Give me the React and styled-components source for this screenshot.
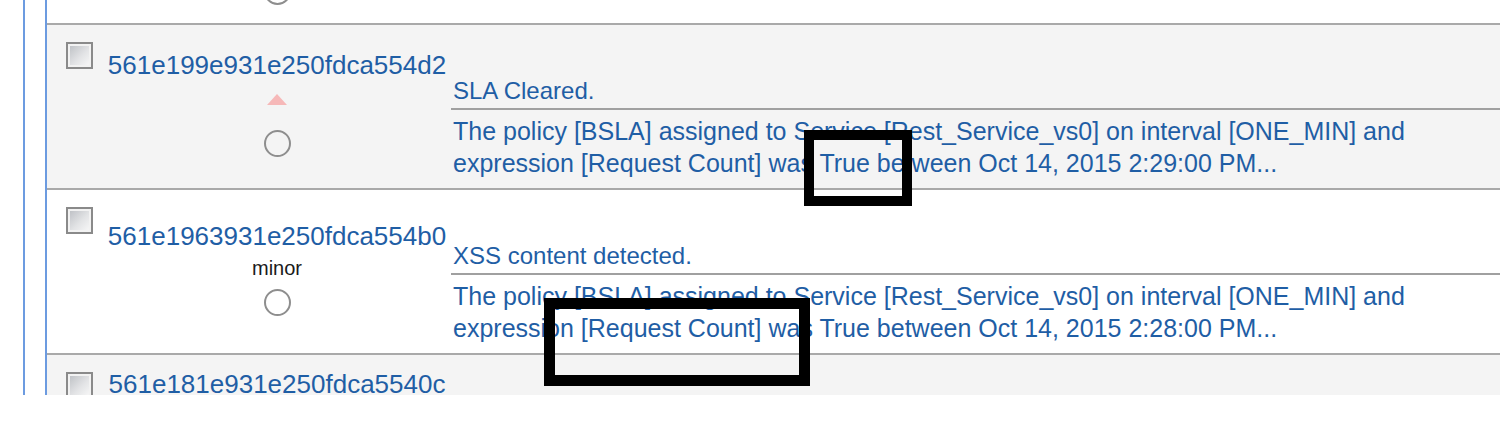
import styled, { createGlobalStyle } from "styled-components";

const GlobalStyle = createGlobalStyle`
  body {
    margin: 0;
    background: #fff;
    font-family: "Liberation Sans", Arial, sans-serif;
  }
`;

const Page = styled.div`
  position: relative;
  width: 1500px;
  height: 429px;
  overflow: hidden;
  background: #fff;
`;

const Frame = styled.div`
  height: 395px;
  margin-left: 23px;
  padding-left: 20px;
  border-left: 2px solid #6c9be0;
  overflow: hidden;
`;

const List = styled.div`
  margin-top: -142px;
  border-left: 2px solid #6c9be0;
`;

const Row = styled.div`
  display: grid;
  grid-template-columns: 60px 340px 1fr;
  height: 163px;
  border-top: 2px solid #a9a9a9;
  background: ${(p) => (p.$shaded ? "#f4f4f4" : "#fff")};
`;

const CheckCell = styled.div`
  padding: 17px 0 0 19px;
`;

const Checkbox = styled.div`
  box-sizing: border-box;
  width: 27px;
  height: 27px;
  border: 2px solid #8a8a8a;
  box-shadow: inset 0 0 0 2px #f2f2f2;
  background: linear-gradient(135deg, #b9bcc1 0%, #e2e3e5 55%, #fafafa 100%);
`;

const IdCell = styled.div`
  display: flex;
  flex-direction: column;
  align-items: center;
  justify-content: ${(p) =>
    p.$valign === "start" ? "flex-start" : p.$valign === "end" ? "flex-end" : "center"};
  padding-top: ${(p) => (p.$valign === "start" ? "16px" : "0")};
  padding-bottom: ${(p) => (p.$valign === "end" ? "18px" : p.$valign === "start" ? "0" : "4px")};
`;

const AlertId = styled.a`
  font-size: 26px;
  line-height: 26px;
  color: #1f5ea5;
  text-decoration: none;
  white-space: nowrap;
`;

const Severity = styled.div`
  margin-top: 9px;
  font-size: 20px;
  line-height: 20px;
  color: #1a1a1a;
`;

const Raised = styled.div`
  margin-top: 16px;
  width: 0;
  height: 0;
  border-left: 10px solid transparent;
  border-right: 10px solid transparent;
  border-bottom: 11px solid #f6b8b8;
`;

const Radio = styled.div`
  box-sizing: border-box;
  margin-top: ${(p) => p.$gap || 0}px;
  width: 27px;
  height: 27px;
  border-radius: 50%;
  border: 2px solid #8e8e8e;
`;

const MessageCell = styled.div`
  padding: 52px 0 0 4px;
  color: #1f5ea5;
`;

const Title = styled.div`
  padding: 0 0 3px 2px;
  font-size: 24px;
  line-height: 28px;
  border-bottom: 2px solid #a0a0a0;
`;

const Description = styled.div`
  padding: 5px 0 0 2px;
  font-size: 25px;
  line-height: 32px;
  white-space: nowrap;
`;

const Callout = styled.div`
  position: absolute;
  box-sizing: border-box;
  border: ${(p) => p.$stroke}px solid #000;
`;

const alerts = [
  {
    id: "561e199e931e250fdca554d2",
    shaded: true,
    title: "SLA Cleared.",
    lines: [
      "The policy [BSLA] assigned to Service [Rest_Service_vs0] on interval [ONE_MIN] and",
      "expression [Request Count] was True between Oct 14, 2015 2:29:00 PM...",
    ],
  },
  {
    id: "561e1963931e250fdca554b0",
    severity: "minor",
    title: "XSS content detected.",
    lines: [
      "The policy [BSLA] assigned to Service [Rest_Service_vs0] on interval [ONE_MIN] and",
      "expression [Request Count] was True between Oct 14, 2015 2:28:00 PM...",
    ],
  },
];

const AlertRow = ({ alert }) => (
  <Row $shaded={alert.shaded}>
    <CheckCell>
      <Checkbox />
    </CheckCell>
    <IdCell>
      <AlertId href="#">{alert.id}</AlertId>
      {alert.severity ? <Severity>{alert.severity}</Severity> : <Raised />}
      <Radio $gap={alert.severity ? 11 : 25} />
    </IdCell>
    <MessageCell>
      <Title>{alert.title}</Title>
      <Description>
        {alert.lines[0]}
        <br />
        {alert.lines[1]}
      </Description>
    </MessageCell>
  </Row>
);

export default function App() {
  return (
    <Page>
      <GlobalStyle />
      <Frame>
        <List>
          <Row>
            <CheckCell />
            <IdCell $valign="end">
              <Radio />
            </IdCell>
            <MessageCell />
          </Row>
          {alerts.map((a) => (
            <AlertRow key={a.id} alert={a} />
          ))}
          <Row $shaded>
            <CheckCell>
              <Checkbox />
            </CheckCell>
            <IdCell $valign="start">
              <AlertId href="#">561e181e931e250fdca5540c</AlertId>
            </IdCell>
            <MessageCell />
          </Row>
        </List>
      </Frame>
      <Callout $stroke={10} style={{ left: 804, top: 130, width: 108, height: 76 }} />
      <Callout $stroke={11} style={{ left: 544, top: 298, width: 266, height: 88 }} />
    </Page>
  );
}
